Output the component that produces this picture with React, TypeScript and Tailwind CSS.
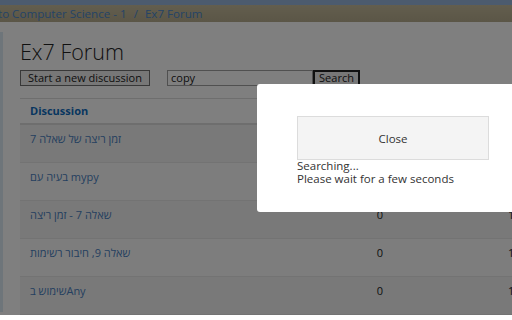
const rows = [
  { title: "זמן ריצה של שאלה 7", count: "0" },
  { title: "בעיה עם mypy", count: "0" },
  { title: "שאלה 7 - זמן ריצה", count: "0" },
  { title: "שאלה 9, חיבור רשימות", count: "0" },
  { title: "שימוש בAny", count: "0" },
];

export default function App() {
  return (
    <div className="relative w-[512px] h-[320px] overflow-hidden bg-white text-[#222] font-['Open_Sans','Noto_Sans',sans-serif]">
      <div className="h-[5px] bg-[#98b6dc]" />
      <div className="h-[17px] bg-gradient-to-b from-[#c6bc9c] to-[#b6ac8e] flex items-center whitespace-nowrap text-[11.6px] text-[#4a88cc]">
        <span className="-ml-[2px]">to Computer Science - 1</span>
        <span className="mx-[7px]">/</span>
        <span>Ex7 Forum</span>
      </div>
      <div className="flex pt-[10px]">
        <div className="w-[3px] h-[280px] bg-[#dceaf4] shrink-0" />
        <div className="pl-[17px] w-[600px] shrink-0">
          <h1 className="text-[21.5px] font-light leading-[26px] mt-[7px]">Ex7 Forum</h1>
          <div className="flex items-center mt-[5px] h-[16px]">
            <button className="h-[16px] w-[130px] border border-[#707070] bg-[#eeeeee] text-[11px] leading-[14px]">
              Start a new discussion
            </button>
            <div className="ml-[17px] h-[16px] w-[146px] border border-[#a0a0a0] bg-white text-[11px] leading-[14px] pl-[3px]">copy</div>
            <button className="h-[16px] w-[47px] border-2 border-[#222] bg-[#eeeeee] text-[11px] leading-[12px]">Search</button>
          </div>
          <div className="mt-[12px] border-t border-[#dddddd]">
            <div className="h-[26px] flex items-center border-b-2 border-[#dddddd] pl-[10px] text-[11px] font-bold text-[#0f6cbf]">
              Discussion
            </div>
            {rows.map((r, i) => (
              <div
                key={i}
                className={`h-[38px] flex border-b border-[#e6e6e6] text-[11px] text-[#4a7fc0] ${i % 2 === 0 ? "bg-[#f2f2f2]" : "bg-[#fbfbfb]"}`}
              >
                <div className="w-[298px] pl-[10px] pt-[6px]">{r.title}</div>
                <div className="w-[124px] pt-[6px] text-center text-[#222]">{r.count}</div>
                <div className="w-[66px]" />
                <div className="w-[60px] pt-[6px] text-[#222]">1</div>
              </div>
            ))}
          </div>
        </div>
      </div>
      <div className="absolute left-0 top-0 w-full h-[315px] bg-black/50" />
      <div className="absolute left-[257px] top-[84px] w-[262px] h-[128px] bg-white rounded-[3px] pl-[40px] pt-[32px] text-[11.5px] text-[#333] leading-[13px]">
        <button className="w-[192px] h-[44px] bg-[#f4f4f4] border border-[#dcdcdc] text-[#333]">Close</button>
        <div className="-mt-[1px]">Searching...</div>
        <div>Please wait for a few seconds</div>
      </div>
    </div>
  );
}
